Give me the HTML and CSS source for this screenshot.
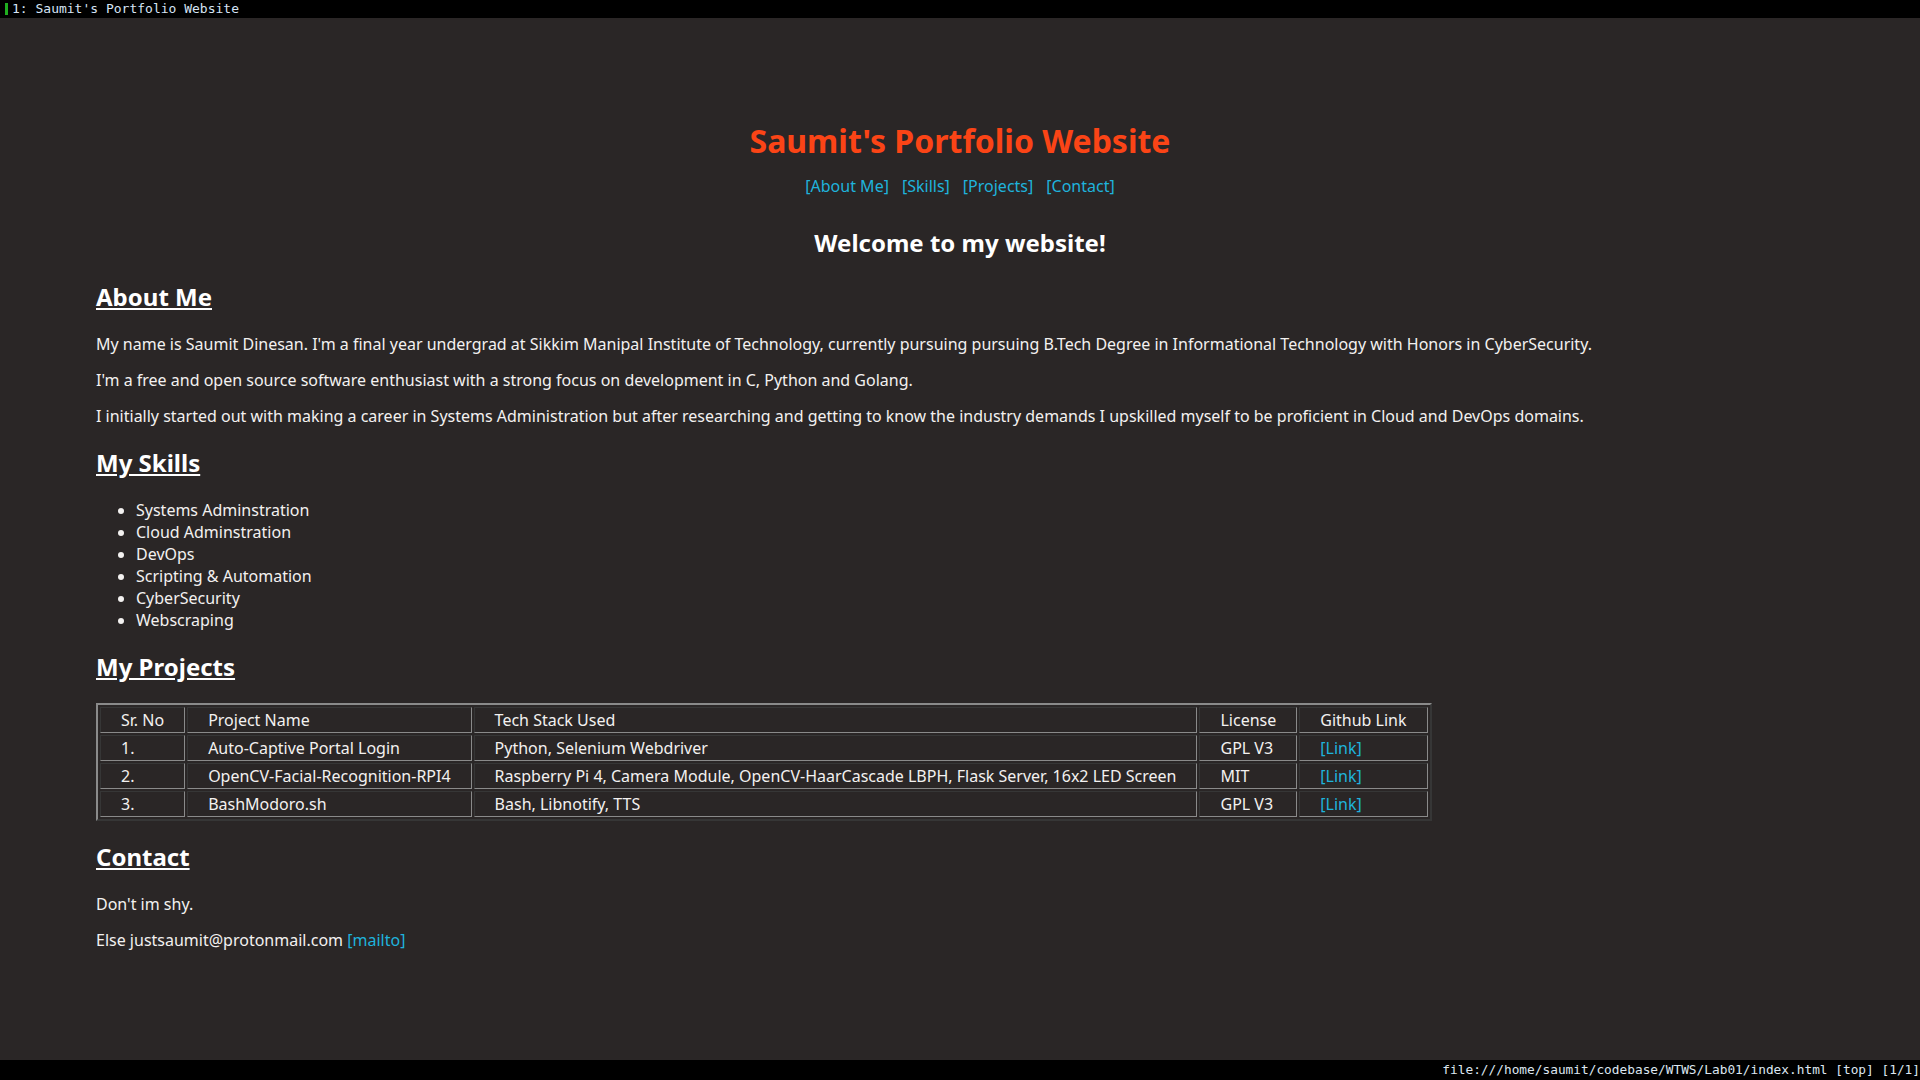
FILE: index.html
```html
<!DOCTYPE html>
<html lang="en">
<head>
<meta charset="utf-8">
<title>Saumit's Portfolio Website</title>
<link rel="stylesheet" href="styles.css">
</head>
<body>
<div class="screen">
  <div class="tabbar"><span class="tab-mark"></span><span class="tab-title">1: Saumit's Portfolio Website</span></div>
  <main class="page">
    <h1 class="title">Saumit's Portfolio Website</h1>
    <nav class="nav">
      <a href="#about">[About Me]</a>
      <a href="#skills">[Skills]</a>
      <a href="#projects">[Projects]</a>
      <a href="#contact">[Contact]</a>
    </nav>
    <h2 class="welcome">Welcome to my website!</h2>

    <h2 class="section" id="about">About Me</h2>
    <p>My name is Saumit Dinesan. I'm a final year undergrad at Sikkim Manipal Institute of Technology, currently pursuing pursuing B.Tech Degree in Informational Technology with Honors in CyberSecurity.</p>
    <p>I'm a free and open source software enthusiast with a strong focus on development in C, Python and Golang.</p>
    <p>I initially started out with making a career in Systems Administration but after researching and getting to know the industry demands I upskilled myself to be proficient in Cloud and DevOps domains.</p>

    <h2 class="section" id="skills">My Skills</h2>
    <ul class="skills">
      <li>Systems Adminstration</li>
      <li>Cloud Adminstration</li>
      <li>DevOps</li>
      <li>Scripting &amp; Automation</li>
      <li>CyberSecurity</li>
      <li>Webscraping</li>
    </ul>

    <h2 class="section" id="projects">My Projects</h2>
    <table class="projects">
      <tr><th>Sr. No</th><th>Project Name</th><th>Tech Stack Used</th><th>License</th><th>Github Link</th></tr>
      <tr><td>1.</td><td>Auto-Captive Portal Login</td><td>Python, Selenium Webdriver</td><td>GPL V3</td><td><a href="#">[Link]</a></td></tr>
      <tr><td>2.</td><td>OpenCV-Facial-Recognition-RPI4</td><td>Raspberry Pi 4, Camera Module, OpenCV-HaarCascade LBPH, Flask Server, 16x2 LED Screen</td><td>MIT</td><td><a href="#">[Link]</a></td></tr>
      <tr><td>3.</td><td>BashModoro.sh</td><td>Bash, Libnotify, TTS</td><td>GPL V3</td><td><a href="#">[Link]</a></td></tr>
    </table>

    <h2 class="section" id="contact">Contact</h2>
    <p>Don't im shy.</p>
    <p>Else justsaumit@protonmail.com <a href="#">[mailto]</a></p>
  </main>
  <div class="statusbar">file:///home/saumit/codebase/WTWS/Lab01/index.html [top] [1/1]</div>
</div>
</body>
</html>
```
FILE: styles.css
```css
html, body {
  margin: 0;
  padding: 0;
  height: 100%;
}

body {
  background: #2a2626;
  color: #f3f1f0;
  font-family: "Noto Sans", "Open Sans", sans-serif;
  font-size: 16px;
  line-height: 22px;
}

.screen {
  display: flex;
  flex-direction: column;
  height: 1080px;
}

.tabbar {
  flex: 0 0 18px;
  height: 18px;
  background: #000;
  display: flex;
  align-items: center;
  font-family: "DejaVu Sans Mono", monospace;
  font-size: 13px;
  line-height: 18px;
  color: #d6e4f5;
}

.tab-mark {
  width: 3px;
  height: 12px;
  margin-left: 5px;
  margin-right: 4px;
  background: #1fae1f;
}

.page {
  flex: 1 1 auto;
  padding: 103px 96px 0;
  overflow: hidden;
}

.statusbar {
  flex: 0 0 20px;
  height: 20px;
  background: #000;
  font-family: "DejaVu Sans Mono", monospace;
  font-size: 12.8px;
  line-height: 20px;
  color: #dde6f0;
  text-align: right;
  white-space: pre;
}

a {
  color: #1fb3dc;
  text-decoration: none;
}

.title {
  margin: 0;
  text-align: center;
  font-size: 32px;
  line-height: 40px;
  font-weight: 700;
  color: #fb4416;
}

.nav {
  display: flex;
  justify-content: center;
  gap: 13px;
  margin-top: 14px;
}

.welcome {
  margin: 30px 0 22px;
  text-align: center;
  font-size: 24px;
  line-height: 32px;
  font-weight: 700;
  color: #ffffff;
}

.section {
  margin: 20px 0;
  font-size: 24px;
  line-height: 32px;
  font-weight: 700;
  color: #ffffff;
  text-decoration: underline;
}

p {
  margin: 14px 0;
}

.skills {
  margin: 20px 0;
  padding-left: 40px;
}

.projects {
  border: 2px outset #8a8a8a;
  border-spacing: 2px;
  margin: 0 0 20px;
}

.projects th,
.projects td {
  border: 1px inset #8a8a8a;
  padding: 1px 20px;
  font-weight: 400;
  text-align: left;
  white-space: nowrap;
}
```
